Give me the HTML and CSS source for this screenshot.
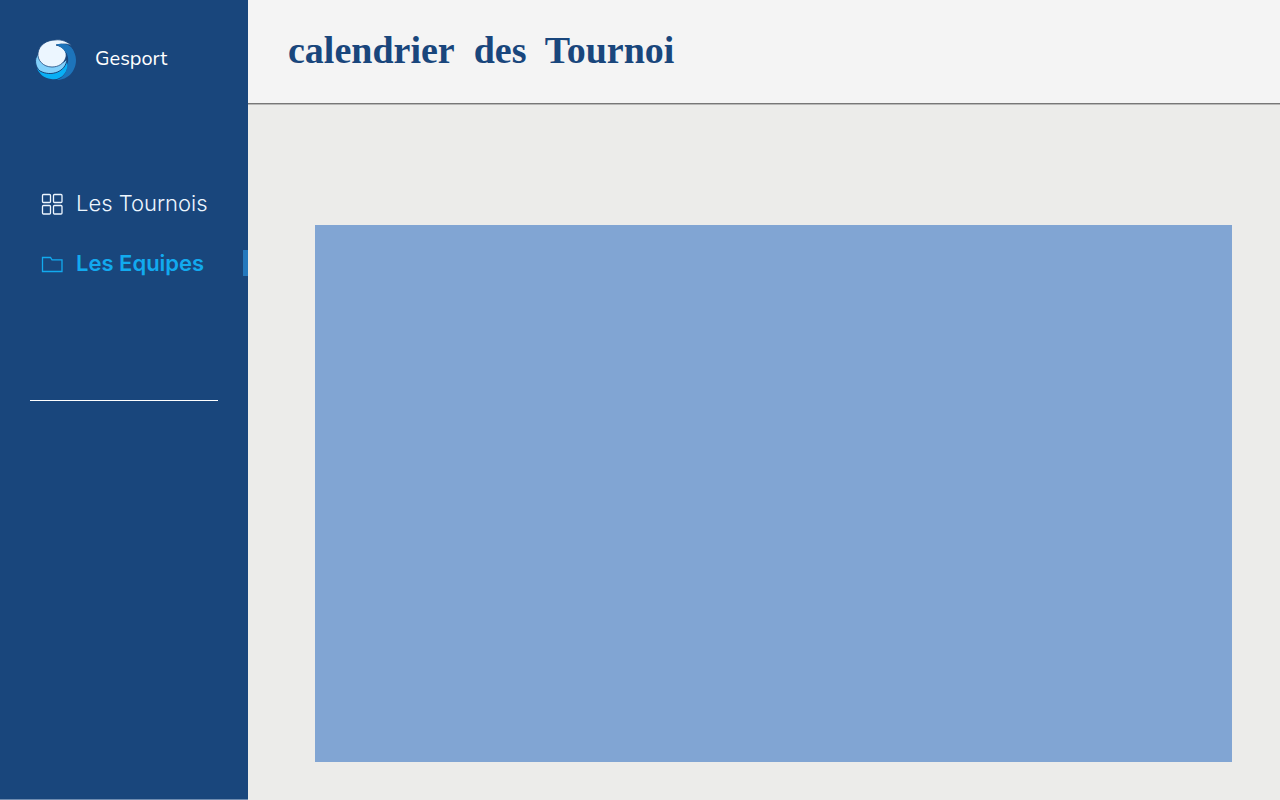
FILE: index.html
```html
<!DOCTYPE html>
<html lang="fr">
<head>
<meta charset="utf-8">
<meta name="viewport" content="width=device-width, initial-scale=1">
<title>Gesport</title>
<link rel="stylesheet" href="styles.css">
</head>
<body>
<div class="app">
  <aside class="sidebar">
    <div class="brand">
      <svg class="logo" viewBox="0 0 42 42" aria-hidden="true">
        <path fill="#1d74bb" d="M20 5C32 1 41 11 41 21C41 32 33 41 22 41C29 38 32 33 32 26C36 18 30 8 20 5Z"/>
        <path fill="#08aff5" d="M2 29C8 36 24 37 32 23C34 33 26 42 16 40C9 39 4 35 2 29Z"/>
        <path fill="#82d0fa" stroke="#19467c" d="M3 15C-1 20 0 28 5 32C16 38 31 33 32 20C23 30 8 28 3 15Z"/>
        <path fill="#ecf6ff" stroke="#19467c" stroke-width=".8" d="M20 1C27 0 33 3 37 7C32 4 27 5 21 6C29 8 32 13 31 18C29 25 23 28 17 28C8 28 2 21 3 14C4 6 12 1 20 1Z"/>
        <path fill="#1d74bb" d="M21 5.500Q29 3 36 8Q39 11 39 15L31 14Q28 8 21 5.500Z"/>
      </svg>
      <span class="brand-name">Gesport</span>
    </div>
    <nav class="menu">
      <a class="menu-link" href="#tournois">
        <svg class="icon" viewBox="0 0 22 22" aria-hidden="true">
          <rect x="1.500" y="1.500" width="8" height="8" rx="1"/>
          <rect x="12.500" y="1.500" width="8.500" height="8" rx="1"/>
          <rect x="1.500" y="12.500" width="8" height="8.500" rx="1"/>
          <rect x="12.500" y="12.500" width="8.500" height="8.500" rx="1"/>
        </svg>
        Les Tournois
      </a>
      <a class="menu-link active" href="#equipes" aria-current="page">
        <svg class="icon" viewBox="0 0 22 22" aria-hidden="true">
          <path d="M1.500 4.500H9.500L11 6.800H21V18.500H1.500Z"/>
        </svg>
        Les Equipes
      </a>
    </nav>
    <hr class="divider">
  </aside>
  <div class="content">
    <header class="topbar">
      <h1 class="title">calendrier&nbsp; des&nbsp; Tournoi</h1>
    </header>
    <main class="page">
      <section class="calendar" aria-label="Calendrier"></section>
    </main>
  </div>
</div>
</body>
</html>
```
FILE: styles.css
```css
* {
  box-sizing: border-box;
}

body {
  margin: 0;
  font-family: Inter, "Liberation Sans", sans-serif;
}

.app {
  display: flex;
  min-height: 100vh;
  background: #ececea;
}

.sidebar {
  flex: 0 0 248px;
  background: #19467c;
  border-bottom: 1px solid #6f8cb0;
}

.brand {
  display: flex;
  align-items: flex-start;
  gap: 18px;
  padding: 39px 35px 0;
}

.logo {
  width: 42px;
  height: 42px;
}

.brand-name {
  color: #fff;
  font: 20px/40px Nunito, "Open Sans", sans-serif;
}

.menu {
  display: flex;
  flex-direction: column;
  gap: 34px;
  margin-top: 109px;
}

.menu-link {
  display: flex;
  align-items: flex-end;
  gap: 13px;
  height: 26px;
  padding-left: 41px;
  color: #edf6ff;
  font-size: 22px;
  font-weight: 300;
  line-height: 26px;
  text-decoration: none;
}

.menu-link.active {
  border-right: 5px solid #2478bd;
  color: #12aaef;
  font-weight: 600;
}

.icon {
  width: 22px;
  height: 22px;
  margin-bottom: 1px;
  fill: none;
  stroke: currentColor;
  stroke-width: 1.3;
}

.divider {
  height: 1px;
  margin: 124px 30px 0;
  border: 0;
  background: #fff;
}

.content {
  display: flex;
  flex: 1;
  flex-direction: column;
  min-width: 0;
}

.topbar {
  padding: 30px 40px 33px;
  border-bottom: 1px solid #777;
  background: #f4f4f4;
  box-shadow: 0 1px #b8b8b7;
}

.title {
  margin: 0;
  color: #19467c;
  font: 700 38px/40px "Liberation Serif", serif;
}

.page {
  display: flex;
  flex: 1;
  padding: 121px 48px 38px 67px;
}

.calendar {
  flex: 1;
  background: #81a5d3;
}
```
